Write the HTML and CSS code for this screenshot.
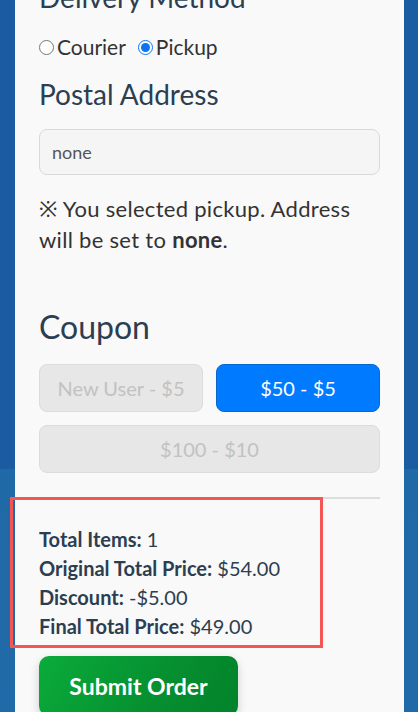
FILE: index.html
```html
<!DOCTYPE html>
<html lang="en">
<head>
<meta charset="utf-8">
<title>Checkout</title>
<link rel="stylesheet" href="styles.css">
</head>
<body>
<div class="page">
  <main class="card">
    <h2 class="heading heading-first">Delivery Method</h2>
    <div class="radio-row">
      <label class="radio"><input type="radio" name="delivery" value="courier">Courier</label>
      <label class="radio"><input type="radio" name="delivery" value="pickup" checked>Pickup</label>
    </div>

    <h2 class="heading heading-postal">Postal Address</h2>
    <input class="text-input" type="text" value="none" readonly>
    <p class="note">※ You selected pickup. Address will be set to <strong>none</strong>.</p>

    <h2 class="heading heading-coupon">Coupon</h2>
    <div class="coupons">
      <button class="coupon" disabled>New User - $5</button>
      <button class="coupon coupon-active">$50 - $5</button>
      <button class="coupon coupon-wide" disabled>$100 - $10</button>
    </div>

    <section class="summary">
      <div class="highlight"></div>
      <p class="line"><strong>Total Items:</strong> 1</p>
      <p class="line"><strong>Original Total Price:</strong> $54.00</p>
      <p class="line"><strong>Discount:</strong> -$5.00</p>
      <p class="line"><strong>Final Total Price:</strong> $49.00</p>
    </section>

    <button class="submit">Submit Order</button>
  </main>
</div>
</body>
</html>
```

FILE: styles.css
```css
html, body {
  margin: 0;
  padding: 0;
}
body {
  font-family: Lato, "Noto Sans", sans-serif;
  background: linear-gradient(to bottom, #1b5ba2 0, #1b5ba2 469px, #1f69a7 469px, #1f6aa8 100%);
  min-height: 712px;
  overflow: hidden;
  color: #333;
}
.page {
  padding: 0 14px 0 15px;
}
.card {
  background: #f9f9f9;
  margin-top: -20px;
  padding: 0 24px 40px;
  box-sizing: border-box;
  width: 389px;
}
.heading {
  margin: 0;
  font-weight: 400;
  color: #2c3e50;
  font-size: 28px;
  line-height: 34px;
}
.radio-row {
  display: flex;
  gap: 12px;
  margin-top: 18px;
  font-size: 21px;
  line-height: 30px;
  color: #333;
}
.radio {
  display: flex;
  align-items: center;
}
.radio input {
  margin: 0 3px 0 0;
  width: 15px;
  height: 15px;
  accent-color: #0a75f0;
}
.heading-postal {
  margin-top: 15px;
}
.text-input {
  display: block;
  box-sizing: border-box;
  width: 100%;
  height: 46px;
  margin-top: 18px;
  padding: 0 12px;
  border: 1px solid #d9d9d9;
  border-radius: 8px;
  background: #f5f5f5;
  font-family: inherit;
  font-size: 18px;
  color: #555;
  outline: none;
}
.note {
  margin: 18px 0 0;
  font-size: 22px;
  letter-spacing: 0.3px;
  line-height: 31px;
  color: #333;
}
.heading-coupon {
  margin-top: 53px;
  font-size: 32px;
  line-height: 38px;
}
.coupons {
  margin-top: 18px;
  display: grid;
  grid-template-columns: 1fr 1fr;
  column-gap: 13px;
  row-gap: 13px;
}
.coupon {
  height: 48px;
  border-radius: 8px;
  border: 1px solid #dcdcdc;
  background: #e7e7e7;
  color: #c2c2c2;
  font-family: inherit;
  font-size: 20px;
  padding: 0;
}
.coupon-active {
  background: #007bff;
  border-color: #0a67cf;
  color: #fff;
}
.coupon-wide {
  grid-column: 1 / 3;
}
.summary {
  position: relative;
  margin-top: 24px;
  border-top: 2px solid #dddddd;
  padding-top: 26px;
}
.highlight {
  position: absolute;
  top: -2px;
  left: -29px;
  width: 313px;
  height: 151px;
  box-sizing: border-box;
  border: 3px solid #f65555;
  pointer-events: none;
}
.line {
  margin: 0;
  font-size: 20px;
  line-height: 29px;
  color: #2c3e50;
}
.line strong {
  font-weight: 700;
}
.submit {
  display: block;
  margin-top: 15px;
  width: 199px;
  height: 60px;
  border: none;
  border-radius: 10px;
  background: linear-gradient(120deg, #0aab3b 0%, #068f30 60%, #03822a 100%);
  color: #fff;
  font-family: inherit;
  font-size: 23px;
  font-weight: 700;
  box-shadow: 0 4px 10px rgba(0, 0, 0, 0.18);
  padding: 0;
}
```
